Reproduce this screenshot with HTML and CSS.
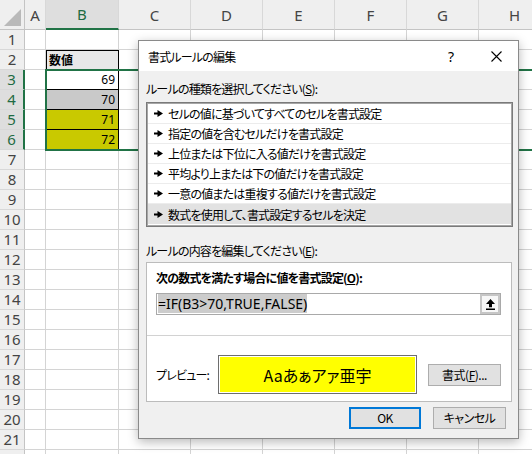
FILE: index.html
```html
<!DOCTYPE html>
<html lang="ja">
<head>
<meta charset="utf-8">
<title>書式ルールの編集</title>
<link rel="stylesheet" href="styles.css">
</head>
<body>
<div class="sheet">
  <div class="corner"><span class="tri"></span></div>
  <div class="ch">A</div><div class="ch on">B</div><div class="ch">C</div><div class="ch">D</div><div class="ch">E</div><div class="ch">F</div><div class="ch">G</div><div class="ch">H</div>

  <div class="rh">1</div><div></div><div></div><div></div><div></div><div></div><div></div><div></div><div></div>
  <div class="rh">2</div><div></div><div class="hd">数値</div><div></div><div></div><div></div><div></div><div></div><div></div>
  <div class="rh on">3</div><div></div><div class="val">69</div><div></div><div></div><div></div><div></div><div></div><div></div>
  <div class="rh on">4</div><div></div><div class="val gray">70</div><div></div><div></div><div></div><div></div><div></div><div></div>
  <div class="rh on">5</div><div></div><div class="val olive">71</div><div></div><div></div><div></div><div></div><div></div><div></div>
  <div class="rh on">6</div><div></div><div class="val olive">72</div><div></div><div></div><div></div><div></div><div></div><div></div>
  <div class="rh">7</div><div></div><div></div><div></div><div></div><div></div><div></div><div></div><div></div>
  <div class="rh">8</div><div></div><div></div><div></div><div></div><div></div><div></div><div></div><div></div>
  <div class="rh">9</div><div></div><div></div><div></div><div></div><div></div><div></div><div></div><div></div>
  <div class="rh">10</div><div></div><div></div><div></div><div></div><div></div><div></div><div></div><div></div>
  <div class="rh">11</div><div></div><div></div><div></div><div></div><div></div><div></div><div></div><div></div>
  <div class="rh">12</div><div></div><div></div><div></div><div></div><div></div><div></div><div></div><div></div>
  <div class="rh">13</div><div></div><div></div><div></div><div></div><div></div><div></div><div></div><div></div>
  <div class="rh">14</div><div></div><div></div><div></div><div></div><div></div><div></div><div></div><div></div>
  <div class="rh">15</div><div></div><div></div><div></div><div></div><div></div><div></div><div></div><div></div>
  <div class="rh">16</div><div></div><div></div><div></div><div></div><div></div><div></div><div></div><div></div>
  <div class="rh">17</div><div></div><div></div><div></div><div></div><div></div><div></div><div></div><div></div>
  <div class="rh">18</div><div></div><div></div><div></div><div></div><div></div><div></div><div></div><div></div>
  <div class="rh">19</div><div></div><div></div><div></div><div></div><div></div><div></div><div></div><div></div>
  <div class="rh">20</div><div></div><div></div><div></div><div></div><div></div><div></div><div></div><div></div>
  <div class="rh">21</div><div></div><div></div><div></div><div></div><div></div><div></div><div></div><div></div>
  <div class="rh">22</div><div></div><div></div><div></div><div></div><div></div><div></div><div></div><div></div>

  <span class="selection"><span class="handle"></span></span>
</div>

<div class="dialog">
  <div class="titlebar">
    <span class="title">書式ルールの編集</span>
    <span class="help">?</span>
    <span class="close">
      <svg width="11" height="11" viewBox="0 0 11 11"><path d="M0.5 0.5 L10.5 10.5 M10.5 0.5 L0.5 10.5" stroke="#000" stroke-width="1.1" fill="none"/></svg>
    </span>
  </div>
  <div class="dbody">
    <div class="label">ルールの種類を選択してください(<u>S</u>):</div>
    <ul class="rules">
      <li><svg class="arr" width="9" height="7" viewBox="0 0 9 7"><path d="M0 2.6h4.5v1.8H0z M3.5 0 L9 3.5 L3.5 7z" fill="#000"/></svg>セルの値に基づいてすべてのセルを書式設定</li>
      <li><svg class="arr" width="9" height="7" viewBox="0 0 9 7"><path d="M0 2.6h4.5v1.8H0z M3.5 0 L9 3.5 L3.5 7z" fill="#000"/></svg>指定の値を含むセルだけを書式設定</li>
      <li><svg class="arr" width="9" height="7" viewBox="0 0 9 7"><path d="M0 2.6h4.5v1.8H0z M3.5 0 L9 3.5 L3.5 7z" fill="#000"/></svg>上位または下位に入る値だけを書式設定</li>
      <li><svg class="arr" width="9" height="7" viewBox="0 0 9 7"><path d="M0 2.6h4.5v1.8H0z M3.5 0 L9 3.5 L3.5 7z" fill="#000"/></svg>平均より上または下の値だけを書式設定</li>
      <li><svg class="arr" width="9" height="7" viewBox="0 0 9 7"><path d="M0 2.6h4.5v1.8H0z M3.5 0 L9 3.5 L3.5 7z" fill="#000"/></svg>一意の値または重複する値だけを書式設定</li>
      <li class="active"><svg class="arr" width="9" height="7" viewBox="0 0 9 7"><path d="M0 2.6h4.5v1.8H0z M3.5 0 L9 3.5 L3.5 7z" fill="#000"/></svg>数式を使用して、書式設定するセルを決定</li>
    </ul>
    <div class="label label2">ルールの内容を編集してください(<u>E</u>):</div>
    <div class="panel">
      <div class="plabel">次の数式を満たす場合に値を書式設定(<u>O</u>):</div>
      <div class="formula">
        <span class="ftext"><span class="hl">=IF(B3&gt;70,TRUE,FALSE)</span></span>
        <span class="refbtn">
          <svg width="9" height="11" viewBox="0 0 9 11"><path d="M4.5 0 L9 5 L6 5 L6 8.3 L3 8.3 L3 5 L0 5z M0 9.5h9V11H0z" fill="#000"/></svg>
        </span>
      </div>
      <div class="sep"></div>
      <div class="preview-row">
        <span class="plbl">プレビュー:</span>
        <div class="pbox"><div class="pinner">Aaあぁアァ亜宇</div></div>
        <button class="btn fmt">書式(<u>F</u>)...</button>
      </div>
    </div>
    <div class="actions">
      <button class="btn ok">OK</button>
      <button class="btn cancel">キャンセル</button>
    </div>
  </div>
</div>
</body>
</html>
```

FILE: styles.css
```css
* { box-sizing: border-box; }

html, body {
  margin: 0;
  padding: 0;
}

body {
  width: 532px;
  height: 454px;
  overflow: hidden;
  position: relative;
  background: #ffffff;
  font-family: "Noto Sans", "Noto Sans CJK JP", sans-serif;
}

/* ---------- spreadsheet ---------- */
.sheet {
  position: relative;
  display: grid;
  grid-template-columns: 25px 21px 73px repeat(6, 72px);
  grid-template-rows: 30px repeat(22, 20px);
  width: 551px;
}

.sheet > div {
  border-right: 1px solid #d4d4d4;
  border-bottom: 1px solid #d4d4d4;
}

.sheet > .corner {
  position: relative;
  background: #efefef;
  border-right-color: #c4c4c4;
  border-bottom-color: #c4c4c4;
}

.tri {
  position: absolute;
  right: 3px;
  bottom: 3px;
  width: 17px;
  height: 17px;
  background: #b9b9b9;
  clip-path: polygon(100% 0, 100% 100%, 0 100%);
}

.sheet > .ch {
  background: #efefef;
  color: #444444;
  font-size: 15px;
  display: flex;
  align-items: center;
  justify-content: center;
  border-right-color: #d8d8d8;
  border-bottom-color: #c4c4c4;
}

.sheet > .ch.on {
  background: #dedede;
  color: #1f6b43;
  border-bottom: 2px solid #217346;
}

.sheet > .rh {
  background: #efefef;
  color: #444444;
  font-size: 15px;
  line-height: 19px;
  text-align: center;
  border-right-color: #c4c4c4;
  border-bottom-color: #d8d8d8;
}

.sheet > .rh.on {
  background: #dedede;
  color: #1f6b43;
  border-right: 2px solid #217346;
}

.sheet > .hd {
  border: 1px solid #000000;
  background: #e8e8e8;
  font-family: "Noto Sans CJK JP", sans-serif;
  font-weight: bold;
  font-size: 12px;
  line-height: 18px;
  padding-left: 2px;
}

.sheet > .val {
  border-left: 1px solid #000000;
  border-right: 1px solid #000000;
  border-bottom: 1px solid #000000;
  text-align: right;
  font-size: 12px;
  line-height: 19px;
  padding-right: 3px;
  color: #000000;
}

.sheet > .gray { background: #c9c9c9; }
.sheet > .olive { background: #c9c900; }

.selection {
  position: absolute;
  grid-column: 3;
  grid-row: 4 / 8;
  top: -1px;
  left: -1px;
  right: 0;
  bottom: -1px;
  border: 2px solid #217346;
  z-index: 2;
}

.handle {
  position: absolute;
  right: -4px;
  bottom: -4px;
  width: 6px;
  height: 6px;
  background: #217346;
  outline: 1px solid #ffffff;
}

/* ---------- dialog ---------- */
.dialog {
  position: absolute;
  left: 138px;
  top: 40px;
  width: 381px;
  height: 399px;
  z-index: 5;
  display: flex;
  flex-direction: column;
  background: #f0f0f0;
  border: 1px solid #8a8a8a;
  box-shadow: 0 3px 10px rgba(0, 0, 0, 0.28);
  font-family: "Noto Sans CJK JP", sans-serif;
  font-feature-settings: "palt";
  font-size: 12px;
  letter-spacing: -0.8px;
  color: #000000;
}

.titlebar {
  flex: none;
  height: 30px;
  display: flex;
  align-items: center;
  background: #ffffff;
}

.title {
  flex: 1;
  padding-left: 9px;
}

.help {
  width: 20px;
  margin-right: 20px;
  text-align: center;
  font-family: "Noto Sans", sans-serif;
  font-size: 14px;
  letter-spacing: 0;
}

.close {
  width: 30px;
  height: 30px;
  margin-right: 7px;
  display: flex;
  align-items: center;
  justify-content: center;
}

.dbody {
  flex: 1;
  display: flex;
  flex-direction: column;
  padding: 9px 6px 9px 7px;
}

.label {
  height: 18px;
  line-height: 18px;
  white-space: nowrap;
}

.label2 { margin-top: 15px; }

.rules {
  list-style: none;
  margin: 4px -1px 0 0;
  padding: 1px 1px 2px;
  height: 125px;
  background: #ffffff;
  border: 1px solid #7a7a7a;
  box-shadow: inset 0 0 0 1px #a6a6a6;
}

.rules li {
  height: 20px;
  display: flex;
  align-items: center;
  padding-left: 6px;
  border-bottom: 1px solid #ececec;
  white-space: nowrap;
}

.rules li.active {
  background: #e2e2e2;
  border-bottom: none;
}

.arr {
  flex: none;
  margin-right: 5px;
}

.panel {
  margin-top: 2px;
  background: #ffffff;
  border: 1px solid #bcbcbc;
  padding-bottom: 7px;
}

.plabel {
  margin: 6px 0 0 9px;
  height: 18px;
  line-height: 18px;
  font-weight: bold;
  white-space: nowrap;
}

.formula {
  margin: 6px 10px 0 9px;
  height: 22px;
  display: flex;
  align-items: center;
  border: 1px solid #a9a9a9;
  background: #ffffff;
}

.ftext {
  flex: 1;
  padding-left: 1px;
  font-family: "Noto Sans", sans-serif;
  font-feature-settings: normal;
  font-size: 14px;
  line-height: 16px;
  letter-spacing: 0;
}

.hl {
  background: #cccccc;
}

.refbtn {
  width: 20px;
  height: 20px;
  display: flex;
  align-items: center;
  justify-content: center;
  background: #f7f7f7;
  border: 2px solid #c6c6c6;
}

.sep {
  margin-top: 20px;
  height: 1px;
  background: #d2d2d2;
}

.preview-row {
  margin-top: 19px;
  display: flex;
  align-items: center;
  padding-left: 9px;
}

.plbl {
  width: 62px;
  white-space: nowrap;
}

.pbox {
  width: 199px;
  height: 39px;
  padding: 1px;
  background: #ffffff;
  border: 1px solid #6e6e6e;
}

.pinner {
  height: 100%;
  background: #ffff00;
  display: flex;
  align-items: center;
  justify-content: center;
  font-size: 16px;
  letter-spacing: 0;
}

.btn {
  height: 22px;
  padding: 0;
  background: #e1e1e1;
  border: 1px solid #adadad;
  color: #000000;
  font-family: "Noto Sans CJK JP", sans-serif;
  font-feature-settings: "palt";
  font-size: 12px;
  letter-spacing: -0.5px;
  line-height: 18px;
}

.fmt {
  width: 73px;
  margin-left: 11px;
}

.actions {
  margin-top: 5px;
  display: flex;
  justify-content: flex-end;
  gap: 12px;
  padding-right: 6px;
}

.ok {
  width: 72px;
  border: 2px solid #0078d7;
}

.cancel {
  width: 73px;
}
```
